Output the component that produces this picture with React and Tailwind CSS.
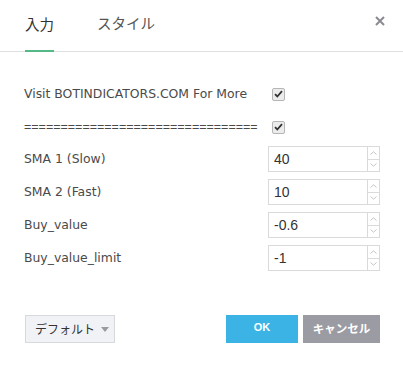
import React from "react";

function Check() {
  return (
    <div className="w-[13px] h-[13px] border border-[#b5b5b5] rounded-[2px] bg-[#ececec] flex items-center justify-center">
      <svg width="9" height="8" viewBox="0 0 9 8">
        <path d="M1 4.2 L3.3 6.5 L8 1.2" stroke="#333" strokeWidth="1.8" fill="none" />
      </svg>
    </div>
  );
}

function NumInput({ value }) {
  return (
    <div className="w-[112px] h-[26px] border border-[#dadada] flex">
      <div className="flex-1 flex items-center pl-[5px] text-[14px] text-[#333] font-['Liberation_Sans',sans-serif]">{value}</div>
      <div className="w-[12px] border-l border-[#dadada] flex flex-col">
        <div className="flex-1 flex items-center justify-center border-b border-[#dadada]">
          <svg width="7" height="4" viewBox="0 0 7 4"><path d="M0.5 3.5 L3.5 0.8 L6.5 3.5" stroke="#c4c4c4" fill="none" strokeWidth="1" /></svg>
        </div>
        <div className="flex-1 flex items-center justify-center">
          <svg width="7" height="4" viewBox="0 0 7 4"><path d="M0.5 0.5 L3.5 3.2 L6.5 0.5" stroke="#c4c4c4" fill="none" strokeWidth="1" /></svg>
        </div>
      </div>
    </div>
  );
}

export default function App() {
  const rows = [
    ["SMA 1 (Slow)", "40"],
    ["SMA 2 (Fast)", "10"],
    ["Buy_value", "-0.6"],
    ["Buy_value_limit", "-1"],
  ];
  return (
    <div className="w-[403px] h-[368px] bg-white font-['DejaVu_Sans',sans-serif] text-[#4a4a4a] relative">
      <div className="h-[52px] border-b border-[#e0e0e0] flex items-end pl-[25px] relative">
        <div className="h-[51px] flex items-center border-b-[2px] border-[#53b987] mb-[-1px] pb-[4px] text-[14.5px] text-[#333] font-['Noto_Sans_CJK_JP',sans-serif]">入力</div>
        <div className="h-[51px] flex items-center ml-[43px] pb-[5px] text-[14.5px] text-[#555] font-['Noto_Sans_CJK_JP',sans-serif]">スタイル</div>
        <div className="absolute right-[18px] top-[16px]">
          <svg width="10" height="10" viewBox="0 0 10 10"><path d="M1 1 L9 9 M9 1 L1 9" stroke="#8a8a91" strokeWidth="2" /></svg>
        </div>
      </div>
      <div className="pl-[24px] pt-[34px] text-[12.4px]">
        <div className="flex items-center h-[16px]">
          <span className="w-[248px] whitespace-nowrap">Visit BOTINDICATORS.COM For More</span>
          <Check />
        </div>
        <div className="flex items-center h-[16px] mt-[17px]">
          <span className="w-[248px] whitespace-nowrap overflow-hidden font-['Liberation_Sans',sans-serif] text-[12.5px]">================================</span>
          <Check />
        </div>
        <div className="flex flex-col gap-[7px] mt-[11px]">
          {rows.map(([l, v]) => (
            <div key={l} className="flex items-center">
              <span className="w-[244px]">{l}</span>
              <NumInput value={v} />
            </div>
          ))}
        </div>
      </div>
      <div className="absolute left-[25px] right-[23px] top-[315px] flex items-center">
        <div className="h-[28px] w-[90px] bg-[#f1f2f6] border border-[#d8d9dd] flex items-center pl-[9px] whitespace-nowrap text-[12px] text-[#333] font-['Noto_Sans_CJK_JP',sans-serif]">
          デフォルト
          <svg className="ml-[6px]" width="8" height="5" viewBox="0 0 8 5"><path d="M0 0 L8 0 L4 5 Z" fill="#9a9ba1" /></svg>
        </div>
        <div className="flex-1" />
        <div className="h-[28px] w-[72px] bg-[#3bb3e4] text-white text-[11px] font-bold flex items-center justify-center pb-[3px] font-['Liberation_Sans',sans-serif]">OK</div>
        <div className="h-[28px] w-[77px] ml-[5px] bg-[#9b9ca3] text-white text-[11.5px] font-bold flex items-center justify-center font-['Noto_Sans_CJK_JP',sans-serif]">キャンセル</div>
      </div>
    </div>
  );
}
